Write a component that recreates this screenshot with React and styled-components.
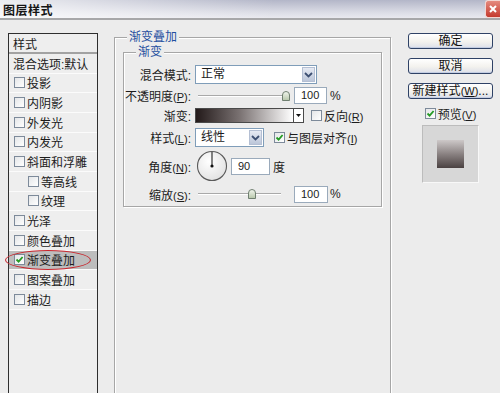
import styled, { createGlobalStyle } from "styled-components";

const GlobalStyle = createGlobalStyle`
  html, body {
    margin: 0;
    padding: 0;
    background: #ececec;
  }
  #root {
    width: 500px;
    height: 393px;
    overflow: hidden;
  }
`;

const Window = styled.div`
  width: 500px;
  height: 393px;
  background: #ececec;
  font-family: "Liberation Sans", "Noto Sans CJK SC", sans-serif;
  font-size: 12px;
  color: #1c1c1c;
  display: flex;
  flex-direction: column;
  overflow: hidden;
`;

const TitleBar = styled.div`
  height: 18px;
  flex: none;
  display: flex;
  align-items: center;
  padding-left: 3px;
  border-bottom: 2px solid #a7a7a9;
  background: linear-gradient(to right, rgba(255, 255, 255, 0.75), rgba(255, 255, 255, 0) 55%),
    linear-gradient(to bottom, #b3b6c8, #dcdde6 70%, #e9e9ef);
`;

const Title = styled.span`
  font-weight: bold;
  font-size: 12px;
  letter-spacing: 0.5px;
  color: #161616;
`;

const CloseButton = styled.div`
  margin-left: auto;
  align-self: flex-start;
  width: 14px;
  height: 16px;
  border-radius: 3px 0 0 3px;
  background: linear-gradient(#e58a7e, #c43a2e);
  border: 1px solid #f3d6d2;
  border-right: none;
  display: flex;
  align-items: center;
  justify-content: center;
`;

const Body = styled.div`
  display: flex;
  align-items: flex-start;
  padding: 10px 0 0 8px;
`;

const StyleList = styled.div`
  width: 90px;
  height: 400px;
  flex: none;
  margin-top: 3px;
  box-sizing: border-box;
  border: 1px solid #2e2e2e;
  background: #eeeeee;
`;

const ListHeader = styled.div`
  height: 20px;
  box-sizing: border-box;
  padding-left: 4px;
  display: flex;
  align-items: center;
  border-bottom: 2px solid #a2a2a2;
`;

const ListRow = styled.div`
  position: relative;
  height: 19.66px;
  box-sizing: border-box;
  display: flex;
  align-items: center;
  gap: 2px;
  padding-left: ${(p) => (p.$indent ? 19 : p.$plain ? 4 : 5)}px;
  border-bottom: 1px solid #fbfbfb;
  background: ${(p) => (p.$selected ? "#bdbdbd" : "transparent")};
  white-space: nowrap;
`;

const Ring = styled.div`
  position: absolute;
  left: -4px;
  top: -1px;
  width: 84px;
  height: 18px;
  border: 1.5px solid #c8242c;
  border-radius: 50%;
  pointer-events: none;
`;

const Box = styled.span`
  width: 11px;
  height: 11px;
  flex: none;
  box-sizing: border-box;
  border: 1px solid #7d8a9a;
  background: linear-gradient(135deg, #e4e6e8, #ffffff);
  display: inline-flex;
  align-items: center;
  justify-content: center;
`;

const Group = styled.fieldset`
  margin: 0 0 0 16px;
  padding: 0 8px;
  width: 277px;
  height: 400px;
  flex: none;
  box-sizing: border-box;
  min-width: 0;
  border: 1px solid #a6a6a6;
  box-shadow: inset 1px 1px 0 #fff, 1px 1px 0 #fff;
`;

const InnerGroup = styled.fieldset`
  margin: 1px 0 0 0;
  padding: 5px 0 0 0;
  min-width: 0;
  border: 1px solid #a6a6a6;
  box-shadow: inset 1px 1px 0 #fff, 1px 1px 0 #fff;
`;

const Legend = styled.legend`
  position: relative;
  margin-left: ${(p) => p.$offset}px;
  padding: 0 2px;
  line-height: 14px;
  color: #1f4f9f;
  background: #ececec;
`;

const FormRow = styled.div`
  height: ${(p) => p.$h}px;
  display: grid;
  grid-template-columns: 67px 1fr;
  column-gap: 4px;
  align-items: center;
`;

const Label = styled.span`
  justify-self: end;
  white-space: nowrap;
`;

const Key = styled.span`
  font-size: 11px;
`;

const Controls = styled.div`
  display: flex;
  align-items: center;
  gap: ${(p) => p.$gap ?? 3}px;
  white-space: nowrap;
`;

const Select = styled.div`
  width: ${(p) => p.$w}px;
  height: 19px;
  box-sizing: border-box;
  border: 1px solid #7f9db9;
  background: #fff;
  display: flex;
  align-items: stretch;
`;

const SelectText = styled.span`
  flex: 1;
  padding-left: 5px;
  line-height: 17px;
`;

const ArrowButton = styled.span`
  width: 13px;
  margin: 1px;
  box-sizing: border-box;
  border: 1px solid #b4bfd3;
  background: linear-gradient(#e6eaf3, #bcc6d9);
  display: flex;
  align-items: center;
  justify-content: center;
`;

const SliderTrack = styled.div`
  position: relative;
  width: 96px;
  height: 16px;
  flex: none;
  margin-right: 1px;

  &::before {
    content: "";
    position: absolute;
    left: 3px;
    right: ${(p) => p.$right}px;
    top: 7px;
    height: 1px;
    background: #a9a9a9;
    border-bottom: 1px solid #ffffff;
  }
`;

const Thumb = styled.svg`
  position: absolute;
  top: 2px;
`;

const Field = styled.div`
  width: ${(p) => p.$w}px;
  height: 17px;
  flex: none;
  box-sizing: border-box;
  border: 1px solid #9aaabb;
  background: #fff;
  padding-left: 6px;
  font-size: 11px;
  line-height: 15px;
`;

const GradientBar = styled.div`
  width: 99px;
  height: 15px;
  box-sizing: border-box;
  border: 1px solid #4a4a4a;
  background: linear-gradient(to right, #231a1a, #7a7272 45%, #ffffff);
`;

const BarDrop = styled.div`
  width: 10px;
  height: 15px;
  box-sizing: border-box;
  border: 1px solid #4a4a4a;
  border-left: none;
  background: #fff;
  display: flex;
  align-items: center;
  justify-content: center;
  margin-right: 7px;
`;

const SideColumn = styled.div`
  width: 85px;
  flex: none;
  margin: 3px 0 0 17px;
  display: flex;
  flex-direction: column;
  align-items: center;
`;

const Button = styled.div`
  width: 85px;
  height: 16px;
  box-sizing: border-box;
  margin-bottom: 9px;
  border: 1px solid #2f4266;
  border-radius: 3px;
  background: linear-gradient(#ffffff, #f3f2ee 55%, #dcdfe9);
  box-shadow: inset 0 -1px 0 #c3cde2;
  text-align: center;
  line-height: 14px;
  color: #111;
`;

const PreviewToggle = styled.div`
  display: flex;
  align-items: center;
  gap: 2px;
  height: 11px;
`;

const PreviewBox = styled.div`
  width: 57px;
  height: 58px;
  margin-top: 6px;
  box-sizing: border-box;
  border: 1px solid;
  border-color: #bcbcbc #f8f8f8 #f8f8f8 #bcbcbc;
  background: #d7d7d7;
  display: flex;
  align-items: center;
  justify-content: center;
`;

const Swatch = styled.div`
  width: 27px;
  height: 28px;
  background: linear-gradient(#cdc8c8, #8a8282 50%, #4a4141);
`;

const Check = ({ checked }) => (
  <Box>
    {checked && (
      <svg width="9" height="9" viewBox="0 0 9 9">
        <path d="M1.5 4.5 L3.6 6.6 L7.6 2" fill="none" stroke="#249b24" strokeWidth="1.8" />
      </svg>
    )}
  </Box>
);

const Chevron = () => (
  <svg width="9" height="6" viewBox="0 0 9 6">
    <path d="M1 1 L4.5 4.5 L8 1" fill="none" stroke="#3d4f72" strokeWidth="1.8" />
  </svg>
);

const Slider = ({ at, right }) => (
  <SliderTrack $right={right}>
    <Thumb width="10" height="12" viewBox="0 0 10 12" style={{ left: at }}>
      <defs>
        <linearGradient id="thumbFill" x1="0" y1="0" x2="0" y2="1">
          <stop offset="0" stopColor="#f3f7ef" />
          <stop offset="1" stopColor="#b6c6a9" />
        </linearGradient>
      </defs>
      <path d="M1.5 5 Q1.5 1.5 5 1.5 Q8.5 1.5 8.5 5 L8.5 10.5 L1.5 10.5 Z" fill="url(#thumbFill)" stroke="#6f7f70" />
    </Thumb>
  </SliderTrack>
);

const Dial = () => (
  <svg width="32" height="32" viewBox="0 0 32 32" style={{ marginLeft: 1, marginRight: 1, flex: "none" }}>
    <defs>
      <radialGradient id="dialFill" cx="0.4" cy="0.35" r="0.7">
        <stop offset="0" stopColor="#ffffff" />
        <stop offset="1" stopColor="#e1e1e1" />
      </radialGradient>
    </defs>
    <circle cx="16" cy="16" r="14.5" fill="url(#dialFill)" stroke="#5a5a5a" strokeWidth="1.1" />
    <line x1="16" y1="16" x2="16" y2="2" stroke="#222" strokeWidth="1.1" />
    <circle cx="16" cy="16" r="1.6" fill="#111" />
  </svg>
);

const Mnemonic = ({ k }) => (
  <Key>
    (<u>{k}</u>)
  </Key>
);

const styles = [
  { name: "投影" },
  { name: "内阴影" },
  { name: "外发光" },
  { name: "内发光" },
  { name: "斜面和浮雕" },
  { name: "等高线", indent: true },
  { name: "纹理", indent: true },
  { name: "光泽" },
  { name: "颜色叠加" },
  { name: "渐变叠加", checked: true, selected: true },
  { name: "图案叠加" },
  { name: "描边" },
];

export default function App() {
  return (
    <Window>
      <GlobalStyle />
      <TitleBar>
        <Title>图层样式</Title>
        <CloseButton>
          <svg width="10" height="10" viewBox="0 0 10 10">
            <path d="M2 2 L8 8 M8 2 L2 8" stroke="#fff" strokeWidth="2" />
          </svg>
        </CloseButton>
      </TitleBar>

      <Body>
        <StyleList>
          <ListHeader>样式</ListHeader>
          <ListRow $plain>混合选项:默认</ListRow>
          {styles.map((s) => (
            <ListRow key={s.name} $indent={s.indent} $selected={s.selected}>
              <Check checked={s.checked} />
              {s.name}
              {s.selected && <Ring />}
            </ListRow>
          ))}
        </StyleList>

        <Group>
          <Legend $offset={4}>渐变叠加</Legend>
          <InnerGroup>
            <Legend $offset={12}>渐变</Legend>

            <FormRow $h={21}>
              <Label>混合模式:</Label>
              <Controls>
                <Select $w={122}>
                  <SelectText>正常</SelectText>
                  <ArrowButton>
                    <Chevron />
                  </ArrowButton>
                </Select>
              </Controls>
            </FormRow>

            <FormRow $h={21}>
              <Label>
                不透明度<Mnemonic k="P" />:
              </Label>
              <Controls $gap={2}>
                <Slider at={86} right={6} />
                <Field $w={33}>100</Field>
                <span style={{ marginLeft: 1 }}>%</span>
              </Controls>
            </FormRow>

            <FormRow $h={19}>
              <Label>渐变:</Label>
              <Controls $gap={0}>
                <GradientBar />
                <BarDrop>
                  <svg width="5" height="3" viewBox="0 0 5 3">
                    <path d="M0 0 L5 0 L2.5 3 Z" fill="#111" />
                  </svg>
                </BarDrop>
                <Check />
                <span style={{ marginLeft: 2 }}>
                  反向<Mnemonic k="R" />
                </span>
              </Controls>
            </FormRow>

            <FormRow $h={25}>
              <Label>
                样式<Mnemonic k="L" />:
              </Label>
              <Controls $gap={2}>
                <Select $w={69}>
                  <SelectText>线性</SelectText>
                  <ArrowButton>
                    <Chevron />
                  </ArrowButton>
                </Select>
                <span style={{ width: 6 }} />
                <Check checked />
                <span>
                  与图层对齐<Mnemonic k="I" />
                </span>
              </Controls>
            </FormRow>

            <FormRow $h={32}>
              <Label>
                角度<Mnemonic k="N" />:
              </Label>
              <Controls $gap={2}>
                <Dial />
                <Field $w={39}>90</Field>
                <span style={{ marginLeft: 1 }}>度</span>
              </Controls>
            </FormRow>

            <FormRow $h={24}>
              <Label>
                缩放<Mnemonic k="S" />:
              </Label>
              <Controls $gap={2}>
                <Slider at={52} right={10} />
                <Field $w={34}>100</Field>
                <span>%</span>
              </Controls>
            </FormRow>
          </InnerGroup>
        </Group>

        <SideColumn>
          <Button>确定</Button>
          <Button>取消</Button>
          <Button>
            新建样式<Mnemonic k="W" />...
          </Button>
          <PreviewToggle>
            <Check checked />
            <span>
              预览<Mnemonic k="V" />
            </span>
          </PreviewToggle>
          <PreviewBox>
            <Swatch />
          </PreviewBox>
        </SideColumn>
      </Body>
    </Window>
  );
}
